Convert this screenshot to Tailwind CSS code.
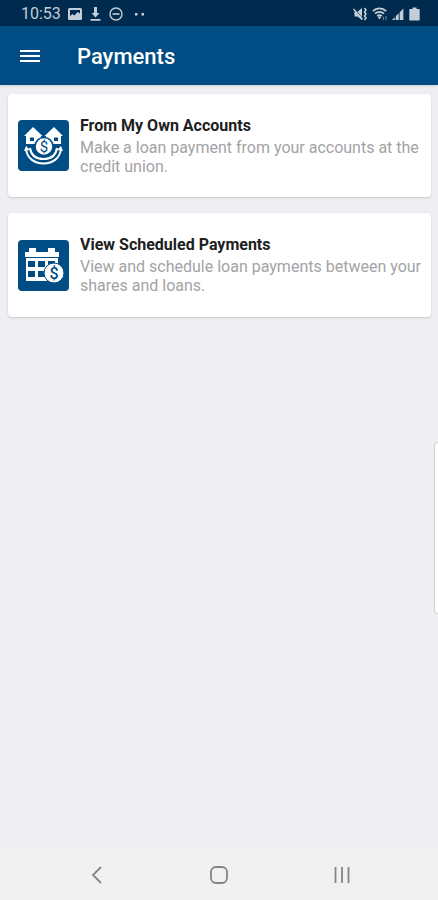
<!DOCTYPE html>
<html lang="en">
<head>
<meta charset="utf-8">
<meta name="viewport" content="width=device-width, initial-scale=1">
<title>Payments</title>
<script src="https://cdn.jsdelivr.net/npm/@tailwindcss/browser@4"></script>
</head>
<body class="relative flex min-h-screen flex-col bg-[#eeeef3] font-[Roboto,sans-serif]">
  <div class="flex h-[26px] shrink-0 items-center justify-between bg-[#002b4e] pt-[2px] pr-[18px] pl-[21px] text-[#c3ced9]">
    <div class="flex items-center">
      <span class="w-[47px] text-base leading-6">10:53</span>
      <svg class="mr-2 h-[14px] w-[14px]" viewBox="0 0 14 14" aria-hidden="true"><rect y="1" width="14" height="12" rx="1.500" fill="currentColor"/><path fill="#002b4e" d="M2 3h10v3.500L9.500 5 6.500 8.500 4.500 7 2 9Z"/></svg>
      <svg class="mr-2 h-[14px] w-[11px]" viewBox="0 0 11 14" aria-hidden="true"><path fill="currentColor" d="M4 0h3v6h2.500L5.500 10.500 1.500 6H4ZM.5 12h10v1.800H.5Z"/></svg>
      <svg class="mr-3 h-[14px] w-[14px]" viewBox="0 0 14 14" fill="none" stroke="currentColor" aria-hidden="true"><circle cx="7" cy="7" r="6" stroke-width="1.400"/><path stroke-width="1.600" d="M3.500 7h7"/></svg>
      <svg class="h-[14px] w-[10px]" viewBox="0 0 10 14" aria-hidden="true"><path fill="currentColor" d="M0 6h2.500v2.500H0zM6.500 6H9v2.500H6.500z"/></svg>
    </div>
    <div class="flex items-center gap-1">
      <svg class="h-[14px] w-[15px]" viewBox="0 0 15 14" aria-hidden="true"><path fill="currentColor" d="M1.500 4.800h3L9 1v12L4.500 9.500h-3Z"/><path stroke="#002b4e" stroke-width="1" d="m1.500 1.500 8 10"/><path stroke="currentColor" stroke-width="1.400" d="m.500 2 9 10.500"/><path fill="none" stroke="currentColor" stroke-width="1.500" d="m11.500 1 1.500 2-1.500 2 1.500 2-1.500 2 1.500 2-1.500 2"/></svg>
      <svg class="h-[14px] w-[16px]" viewBox="0 0 16 14" fill="none" stroke="currentColor" aria-hidden="true"><path stroke-width="1.700" d="M.8 4.200C4.500.4 10.500.4 14.200 4.200M3 6.700c2.500-2.500 6.500-2.500 9 0M5.200 9c1.300-1.300 3.300-1.300 4.600 0"/><path fill="currentColor" stroke="none" d="m5.500 9.500 2 3 2-3Z"/><path stroke-width="1.200" opacity=".5" d="M11.500 13V9.500M14 9v4"/></svg>
      <svg class="h-[14px] w-[13px]" viewBox="0 0 13 14" aria-hidden="true"><path fill="currentColor" opacity=".35" d="M0 13 12 1v12Z"/><path fill="currentColor" d="M0 13l2.500-2.500V13ZM4 9l2.500-2.500V13H4ZM8 5l3-3v11H8Z"/></svg>
      <svg class="h-[14px] w-[11px]" viewBox="0 0 11 14" aria-hidden="true"><path fill="currentColor" d="M3.500.500h4V2H10a.7.7 0 0 1 .7.7v10a.7.7 0 0 1-.7.7H1a.7.7 0 0 1-.7-.7v-10A.7.7 0 0 1 1 2h2.500Z"/></svg>
    </div>
  </div>

  <header class="flex h-[59px] shrink-0 items-center bg-[#004c85] pt-[2px] pl-5 text-white shadow-sm">
    <button type="button" aria-label="Open menu" class="mr-[37px]">
      <svg class="block h-5 w-5" viewBox="0 0 20 20" fill="none" stroke="currentColor" stroke-width="2" aria-hidden="true"><path d="M0 4h20M0 9h20M0 14h20"/></svg>
    </button>
    <h1 class="text-[22px] leading-7 font-medium">Payments</h1>
  </header>

  <main class="flex grow flex-col gap-4 pt-[9px] pr-[7px] pl-2">
    <a href="#own-accounts" class="flex min-h-[103px] items-center rounded-[4px] bg-white pr-1 pl-[10px] shadow-[0_1px_2px_#c6c6ca]">
      <svg class="mr-[11px] h-[51px] w-[51px] shrink-0" viewBox="0 0 51 51" aria-hidden="true">
        <rect width="51" height="51" rx="4" fill="#004c85"/>
        <path fill="#fff" fill-rule="evenodd" d="M15 7 24.500 16H23v8H8v-8H6ZM12 17.500v3.500h4v-3.500ZM36 7l9 9h-2v8H28v-8h-1.500ZM36 17.500v3.500h4v-3.500Z"/>
        <path fill="none" stroke="#fff" stroke-width="2" d="M8 29c1 9 8 14.500 17.500 14.500S42 38 43 29M12 28c1 7 6 11 13.500 11S38 35 39 28"/>
        <path fill="#fff" d="m6 31 2-5 4 4ZM39 30l4-4 2 5Z"/>
        <circle cx="26" cy="26.500" r="9" fill="#fff" stroke="#004c85" stroke-width="1.500"/>
        <text x="26" y="32" text-anchor="middle" font-family="Roboto, sans-serif" font-size="15" font-weight="400" fill="#004c85">$</text>
      </svg>
      <span class="block">
        <span class="block text-base leading-5 font-bold text-[#202020]">From My Own Accounts</span>
        <span class="block pt-[2px] text-base leading-[19px] text-[#a3a3a6]">Make a loan payment from your accounts at the credit union.</span>
      </span>
    </a>
    <a href="#scheduled" class="flex min-h-[104px] items-center rounded-[4px] bg-white pr-1 pl-[10px] shadow-[0_1px_2px_#c6c6ca]">
      <svg class="mr-[11px] h-[51px] w-[51px] shrink-0" viewBox="0 0 51 51" aria-hidden="true">
        <rect width="51" height="51" rx="4" fill="#004c85"/>
        <path fill="#fff" d="M11 8h7v4h-7zM30 8h7v4h-7zM7 12h34v5H7zM8 18h32v23H8z"/>
        <path fill="#004c85" d="M10 21h7v6h-7zM20 21h7v6h-7zM30 21h7v6h-7zM10 31h7v6h-7zM20 31h7v6h-7z"/>
        <circle cx="36" cy="33" r="10" fill="#fff" stroke="#004c85" stroke-width="1"/>
        <text x="36" y="39" text-anchor="middle" font-family="Roboto, sans-serif" font-size="16" font-weight="500" fill="#004c85">$</text>
      </svg>
      <span class="block">
        <span class="block text-base leading-5 font-bold text-[#202020]">View Scheduled Payments</span>
        <span class="block pt-[2px] text-base leading-[19px] text-[#a3a3a6]">View and schedule loan payments between your shares and loans.</span>
      </span>
    </a>
  </main>

  <div class="absolute top-[442px] right-0 h-[172px] w-1 rounded-l-[4px] border border-r-0 border-[#cfcfd3] bg-white"></div>

  <nav aria-label="System navigation" class="flex h-[51px] shrink-0 items-center bg-[#f1f1f1] text-[#858585]">
    <div class="flex grow justify-between px-[86px]">
      <button type="button" aria-label="Back"><svg class="block h-5 w-5" viewBox="0 0 20 20" fill="none" stroke="currentColor" stroke-width="1.800" aria-hidden="true"><path d="m15 2-8 8 8 8"/></svg></button>
      <button type="button" aria-label="Home"><svg class="block h-5 w-5" viewBox="0 0 20 20" fill="none" stroke="currentColor" stroke-width="1.800" aria-hidden="true"><rect x="2" y="2" width="16" height="16" rx="5"/></svg></button>
      <button type="button" aria-label="Recent apps"><svg class="block h-5 w-5" viewBox="0 0 20 20" fill="none" stroke="currentColor" stroke-width="1.800" aria-hidden="true"><path d="M3.500 2v16M10 2v16M16.500 2v16"/></svg></button>
    </div>
  </nav>
</body>
</html>
